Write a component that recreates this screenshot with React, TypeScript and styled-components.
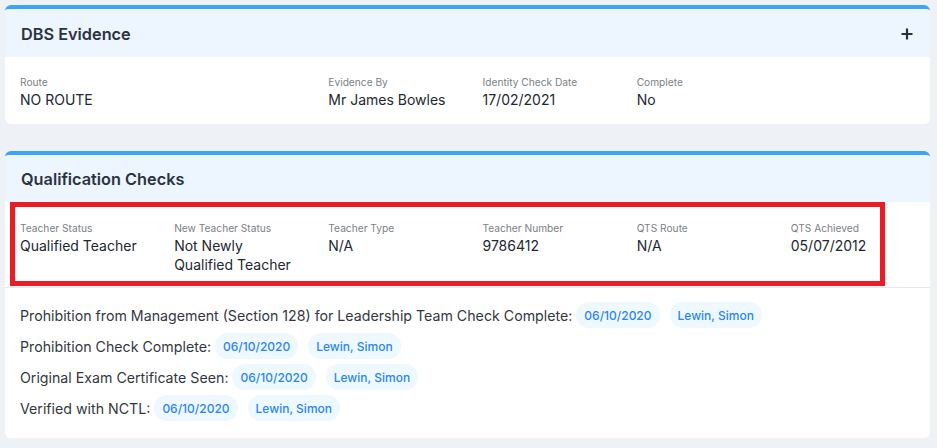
import React from "react";
import styled, { createGlobalStyle } from "styled-components";

const Global = createGlobalStyle`
  html, body { margin: 0; padding: 0; }
  body {
    background: #eef2f6;
    font-family: Inter, "Noto Sans", "Liberation Sans", sans-serif;
    color: #2a2f36;
  }
`;

const Page = styled.div`
  width: 937px;
  height: 448px;
  padding: 5px 0 0 5px;
  box-sizing: border-box;
  display: flex;
  flex-direction: column;
  gap: 27px;
  overflow: hidden;
`;

const Card = styled.section`
  width: 925px;
  background: #ffffff;
  border-top: 4px solid #3aa5f6;
  border-radius: 6px;
  overflow: hidden;
`;

const Header = styled.div<{ $h: number }>`
  height: ${(p) => p.$h}px;
  background: #edf5fe;
  display: flex;
  align-items: center;
  justify-content: space-between;
  padding: 0 17px 0 16px;
`;

const Title = styled.h2`
  margin: 0;
  font-size: 16.3px;
  font-weight: 600;
  color: #2b3340;
  padding-top: 1px;
`;

const PlusButton = styled.button`
  border: 0;
  background: none;
  padding: 0;
  width: 12px;
  height: 12px;
  display: flex;
  align-items: center;
  justify-content: center;
  cursor: pointer;
  margin-top: 2px;
`;

const FieldGrid = styled.div<{ $cols: string }>`
  display: grid;
  grid-template-columns: ${(p) => p.$cols};
`;

const Field = styled.div<{ $span?: number }>`
  grid-column: span ${(p) => p.$span ?? 1};
  padding-left: 15px;
  display: flex;
  flex-direction: column;
  gap: 1px;
`;

const Label = styled.span`
  font-size: 10.2px;
  line-height: 13px;
  color: #7a7f87;
`;

const Value = styled.span`
  font-size: 14px;
  line-height: 19px;
  color: #23282f;
`;

const DbsBody = styled.div`
  padding: 19px 0 15px 0;
`;

const Highlight = styled.div`
  width: 875px;
  box-sizing: border-box;
  margin-left: 5px;
  border: 5px solid #ec1c24;
  padding: 15px 0 7px 0;
`;

const HighlightGrid = styled(FieldGrid)`
  margin-left: -10px;
`;

const Divider = styled.hr`
  margin: 1px 0 0 0;
  border: 0;
  border-top: 1px solid #e6e9ee;
`;

const Checks = styled.div`
  padding: 14px 15px 17px 15px;
  display: flex;
  flex-direction: column;
  gap: 5px;
`;

const CheckRow = styled.div`
  display: flex;
  align-items: center;
  height: 26px;
`;

const CheckText = styled.span`
  font-size: 14.2px;
  color: #333840;
  margin-right: 4px;
`;

const Pill = styled.span`
  display: inline-flex;
  align-items: center;
  height: 26px;
  padding: 0 8px;
  border-radius: 13px;
  background: #eef8ff;
  color: #2a86ef;
  font-size: 12px;
  font-weight: 500;
  margin-right: 10px;
`;

const Plus = () => (
  <svg width="12" height="12" viewBox="0 0 12 12">
    <path d="M6 0.5V11.5M0.5 6H11.5" stroke="#27303c" strokeWidth="2.2" />
  </svg>
);

const checks = [
  "Prohibition from Management (Section 128) for Leadership Team Check Complete:",
  "Prohibition Check Complete:",
  "Original Exam Certificate Seen:",
  "Verified with NCTL:",
];

const col = "154.17px";

export default function App() {
  return (
    <>
      <Global />
      <Page>
        <Card>
          <Header $h={48}>
            <Title>DBS Evidence</Title>
            <PlusButton aria-label="Add">
              <Plus />
            </PlusButton>
          </Header>
          <DbsBody>
            <FieldGrid $cols={`repeat(6, ${col})`}>
              <Field $span={2}>
                <Label>Route</Label>
                <Value>NO ROUTE</Value>
              </Field>
              <Field>
                <Label>Evidence By</Label>
                <Value>Mr James Bowles</Value>
              </Field>
              <Field>
                <Label>Identity Check Date</Label>
                <Value>17/02/2021</Value>
              </Field>
              <Field>
                <Label>Complete</Label>
                <Value>No</Value>
              </Field>
            </FieldGrid>
          </DbsBody>
        </Card>

        <Card>
          <Header $h={47}>
            <Title>Qualification Checks</Title>
          </Header>
          <Highlight>
            <HighlightGrid $cols={`repeat(5, ${col}) 1fr`}>
              <Field>
                <Label>Teacher Status</Label>
                <Value>Qualified Teacher</Value>
              </Field>
              <Field>
                <Label>New Teacher Status</Label>
                <Value>
                  Not Newly
                  <br />
                  Qualified Teacher
                </Value>
              </Field>
              <Field>
                <Label>Teacher Type</Label>
                <Value>N/A</Value>
              </Field>
              <Field>
                <Label>Teacher Number</Label>
                <Value>9786412</Value>
              </Field>
              <Field>
                <Label>QTS Route</Label>
                <Value>N/A</Value>
              </Field>
              <Field>
                <Label>QTS Achieved</Label>
                <Value>05/07/2012</Value>
              </Field>
            </HighlightGrid>
          </Highlight>
          <Divider />
          <Checks>
            {checks.map((c) => (
              <CheckRow key={c}>
                <CheckText>{c}</CheckText>
                <Pill>06/10/2020</Pill>
                <Pill>Lewin, Simon</Pill>
              </CheckRow>
            ))}
          </Checks>
        </Card>
      </Page>
    </>
  );
}
